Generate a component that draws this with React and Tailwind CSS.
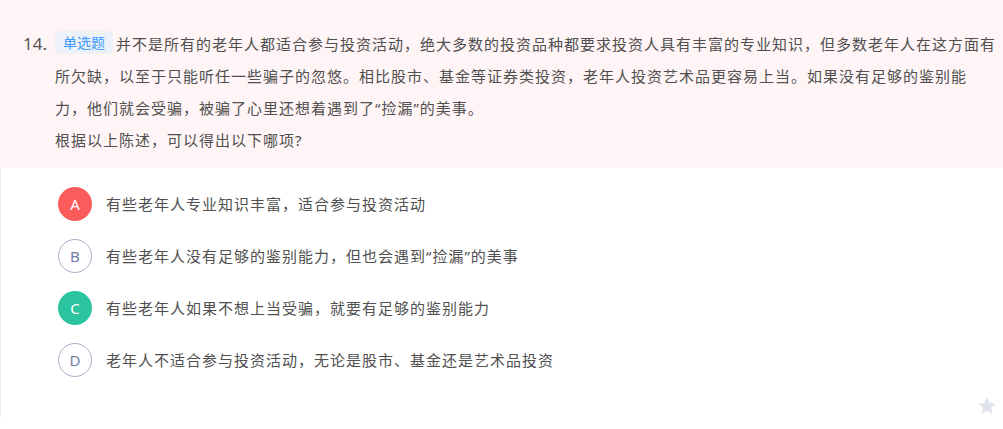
import React from "react";

const font = { fontFamily: '"Noto Sans", "Noto Sans CJK SC", sans-serif' };

function Option({ letter, text, variant }) {
  let circle = "border border-[#aab0c8] text-[#7580a6] bg-white";
  if (variant === "red") circle = "bg-[#fb5b5b] text-white";
  if (variant === "green") circle = "bg-[#2ac49f] text-white";
  return (
    <div className="flex h-[52px] items-center">
      <div
        className={`ml-[57px] flex h-[34px] w-[34px] shrink-0 items-center justify-center rounded-full text-[15px] ${circle}`}
      >
        {letter}
      </div>
      <div className="ml-[14px] text-[15px] tracking-[1px] text-[#505050]">{text}</div>
    </div>
  );
}

export default function App() {
  return (
    <div className="h-[429px] w-[1003px] overflow-hidden bg-white" style={font}>
      <div className="flex bg-[#fff5f6] pb-[12px] pl-[23px] pr-[6px] pt-[28px]">
        <div className="w-[32px] shrink-0 text-[17px] leading-[32px] text-[#555]">14.</div>
        <div className="flex-1 text-[15px] leading-[32px] tracking-[1px] text-[#505050]">
          <span className="mr-[3px] mt-[3px] inline-flex h-[23px] items-center rounded-[4px] bg-[#edf2f9] px-[8px] align-top text-[14px] leading-[23px] tracking-normal text-[#3d9bff]">
            单选题
          </span>
          并不是所有的老年人都适合参与投资活动，绝大多数的投资品种都要求投资人具有丰富的专业知识，但多数老年人在这方面有所欠缺，以至于只能听任一些骗子的忽悠。相比股市、基金等证券类投资，老年人投资艺术品更容易上当。如果没有足够的鉴别能力，他们就会受骗，被骗了心里还想着遇到了“捡漏”的美事。
          <br />
          根据以上陈述，可以得出以下哪项?
        </div>
      </div>
      <div className="border-l border-[#eceef5] pt-[10px]">
        <Option letter="A" variant="red" text="有些老年人专业知识丰富，适合参与投资活动" />
        <Option letter="B" text="有些老年人没有足够的鉴别能力，但也会遇到“捡漏”的美事" />
        <Option letter="C" variant="green" text="有些老年人如果不想上当受骗，就要有足够的鉴别能力" />
        <Option letter="D" text="老年人不适合参与投资活动，无论是股市、基金还是艺术品投资" />
        <div className="flex justify-end pr-[5px] pt-[9px]">
          <svg width="22" height="22" viewBox="0 0 24 24">
            <path
              d="M12 2.5l2.9 6.1 6.6.8-4.9 4.6 1.3 6.6L12 17.3l-5.9 3.3 1.3-6.6-4.9-4.6 6.6-.8z"
              fill="#e1e4ec"
            />
          </svg>
        </div>
      </div>
    </div>
  );
}
